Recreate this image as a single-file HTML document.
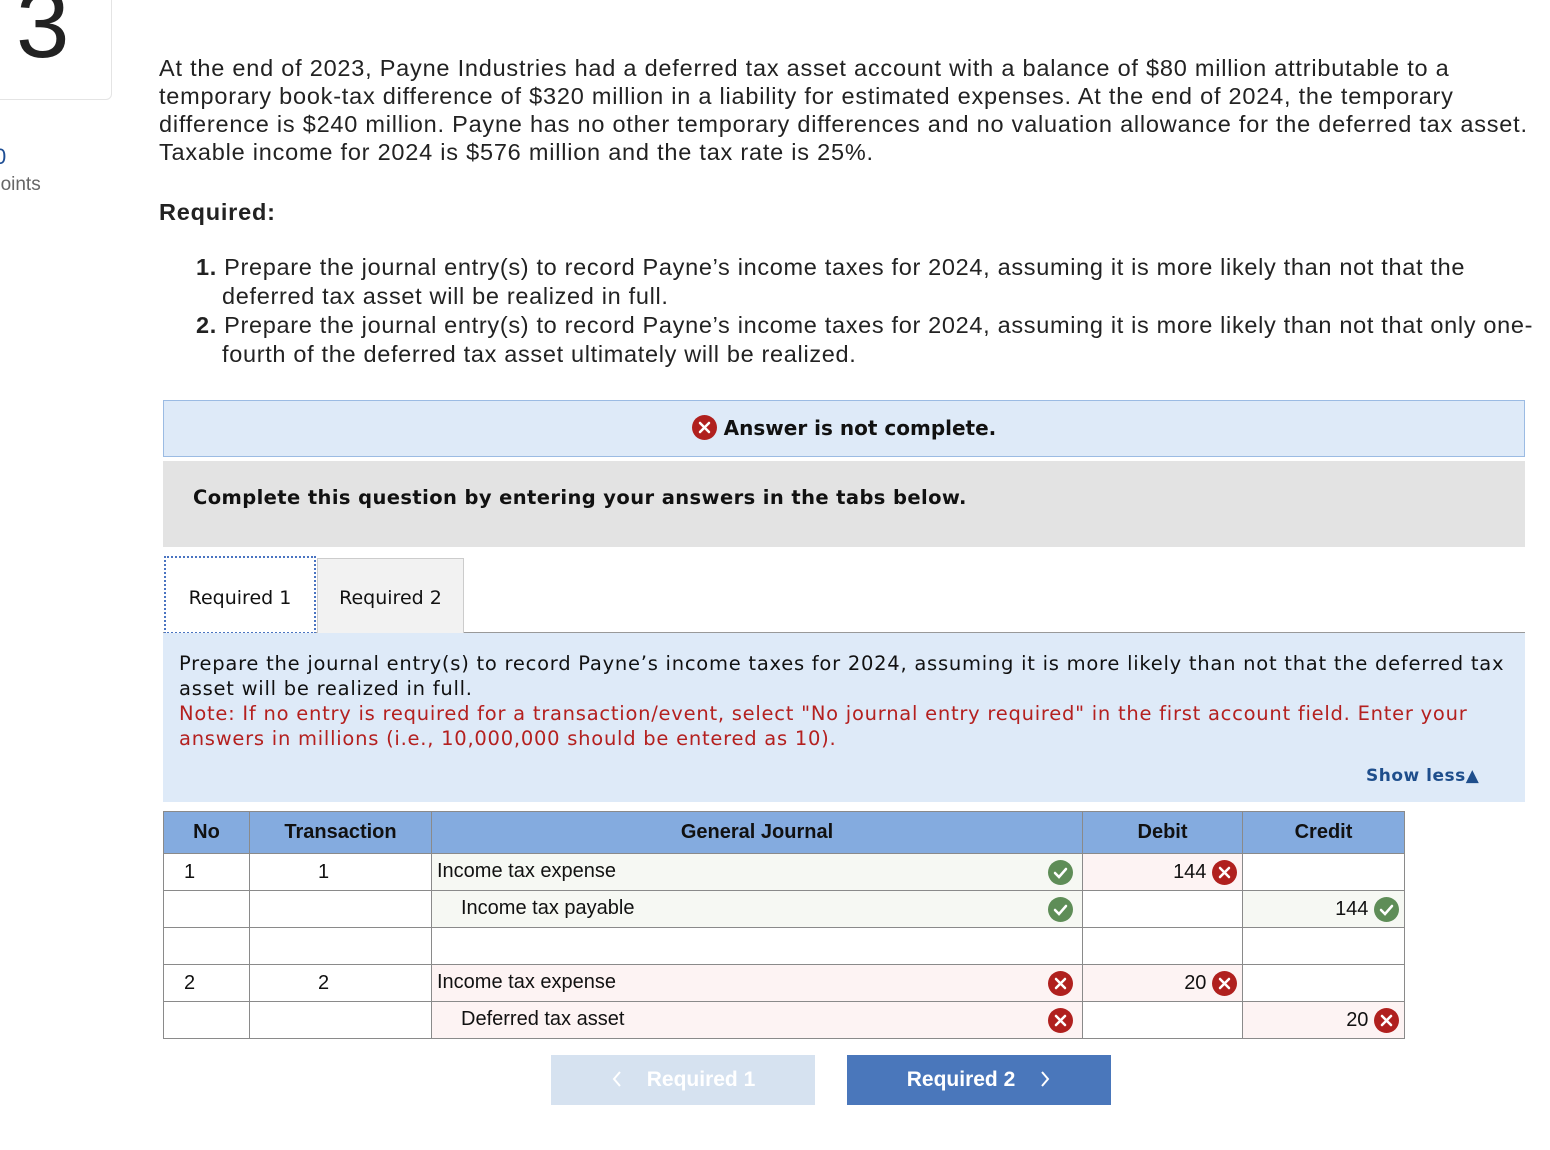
<!DOCTYPE html>
<html><head><meta charset="utf-8"><style>
body{margin:0;width:1550px;height:1150px;background:#fff;font-family:"Liberation Sans",sans-serif;color:#222;position:relative;overflow:hidden}
.a{position:absolute}
.p{font-size:23.5px;line-height:28px;color:#222;letter-spacing:0.78px;white-space:nowrap}
.ic{display:inline-block;width:25px;height:25px;border-radius:50%;vertical-align:middle;position:relative}
.ok{background:#5e8d57}.bad{background:#b0201e}
.ic svg{position:absolute;left:0;top:0}
table{border-collapse:collapse;font-size:20px;color:#111}
td,th{border:1px solid #8a8a8a;padding:0 5px;height:36px}
th{background:#84abdf;height:41px;font-weight:bold}
.gr{background:#f6f8f3}.rd{background:#fdf3f3}
.r{text-align:right}
</style></head><body>
<div class="a" style="left:-10px;top:-20px;width:120px;height:118px;border:1px solid #e4e4e4;border-radius:6px"></div>
<div class="a" style="left:16px;top:-30px;font-size:96px;color:#222;font-weight:300">3</div>
<div class="a" style="left:-6px;top:144px;font-size:22px;color:#1e4e94">0</div>
<div class="a" style="left:-10px;top:174px;font-size:19px;color:#666">points</div>
<div class="a p" style="left:159px;top:54px">At the end of 2023, Payne Industries had a deferred tax asset account with a balance of $80 million attributable to a<br>temporary book-tax difference of $320 million in a liability for estimated expenses. At the end of 2024, the temporary<br>difference is $240 million. Payne has no other temporary differences and no valuation allowance for the deferred tax asset.<br>Taxable income for 2024 is $576 million and the tax rate is 25%.</div>
<div class="a p" style="left:159px;top:198px;font-weight:bold">Required:</div>
<div class="a p" style="left:196px;top:253px;line-height:29px;letter-spacing:0.68px">
<div><b>1.</b> Prepare the journal entry(s) to record Payne’s income taxes for 2024, assuming it is more likely than not that the<br><span style="padding-left:26px">deferred tax asset will be realized in full.</span></div>
<div><b>2.</b> Prepare the journal entry(s) to record Payne’s income taxes for 2024, assuming it is more likely than not that only one-<br><span style="padding-left:26px">fourth of the deferred tax asset ultimately will be realized.</span></div></div>
<div class="a" style="left:163px;top:400px;width:1360px;height:55px;background:#deeaf8;border:1px solid #9bbbe3;text-align:center;line-height:55px;font-family:'DejaVu Sans',sans-serif;font-weight:bold;font-size:20px;color:#111">
<span class="ic bad" style="margin-top:-4px"><svg width="25" height="25"><path d="M8 8L17 17M17 8L8 17" stroke="#fff" stroke-width="2.5" stroke-linecap="round"/></svg></span> Answer is not complete.</div>
<div class="a" style="left:163px;top:461px;width:1362px;height:86px;background:#e3e3e3;font-family:'DejaVu Sans',sans-serif;font-weight:bold;font-size:19.5px;letter-spacing:0.4px;color:#111;line-height:74px;padding-left:30px;box-sizing:border-box">Complete this question by entering your answers in the tabs below.</div>
<div class="a" style="left:163px;top:632px;width:1362px;height:1px;background:#999"></div>
<div class="a" style="left:164px;top:556px;width:152px;height:78px;border:2px dotted #4a74c1;box-sizing:border-box;background:#fff;text-align:center;line-height:80px;font-family:'DejaVu Sans',sans-serif;font-size:19px;color:#111">Required 1</div>
<div class="a" style="left:317px;top:558px;width:147px;height:75px;border:1px solid #ccc;border-bottom:none;box-sizing:border-box;background:#f2f2f2;text-align:center;line-height:78px;font-family:'DejaVu Sans',sans-serif;font-size:19px;color:#111">Required 2</div>
<div class="a" style="left:163px;top:633px;width:1362px;height:169px;background:#deeaf8"></div>
<div class="a" style="left:179px;top:651px;white-space:nowrap;font-family:'DejaVu Sans',sans-serif;font-size:19.5px;letter-spacing:0.75px;line-height:25px;color:#111">Prepare the journal entry(s) to record Payne’s income taxes for 2024, assuming it is more likely than not that the deferred tax<br>asset will be realized in full.<br><span style="color:#b4201f">Note: If no entry is required for a transaction/event, select "No journal entry required" in the first account field. Enter your<br>answers in millions (i.e., 10,000,000 should be entered as 10).</span></div>
<div class="a" style="left:1366px;top:766px;font-family:'DejaVu Sans',sans-serif;font-weight:bold;font-size:17px;letter-spacing:0.5px;color:#1e4e8c">Show less▲</div>
<table class="a" style="left:163px;top:811px;width:1242px">
<tr><th style="width:75px">No</th><th style="width:171px">Transaction</th><th>General Journal</th><th style="width:149px">Debit</th><th style="width:151px">Credit</th></tr>
<tr><td style="padding-left:20px">1</td><td style="padding-left:68px">1</td><td class="gr">Income tax expense<span class="ic ok" style="float:right;margin-right:4px"><svg width="25" height="25"><path d="M7 13L11 17L18 9" stroke="#fff" stroke-width="2.5" fill="none" stroke-linecap="round"/></svg></span></td><td class="rd r">144 <span class="ic bad"><svg width="25" height="25"><path d="M8 8L17 17M17 8L8 17" stroke="#fff" stroke-width="2.5" stroke-linecap="round"/></svg></span></td><td></td></tr>
<tr><td></td><td></td><td class="gr" style="padding-left:29px">Income tax payable<span class="ic ok" style="float:right;margin-right:4px"><svg width="25" height="25"><path d="M7 13L11 17L18 9" stroke="#fff" stroke-width="2.5" fill="none" stroke-linecap="round"/></svg></span></td><td></td><td class="gr r">144 <span class="ic ok"><svg width="25" height="25"><path d="M7 13L11 17L18 9" stroke="#fff" stroke-width="2.5" fill="none" stroke-linecap="round"/></svg></span></td></tr>
<tr><td></td><td></td><td></td><td></td><td></td></tr>
<tr><td style="padding-left:20px">2</td><td style="padding-left:68px">2</td><td class="rd">Income tax expense<span class="ic bad" style="float:right;margin-right:4px"><svg width="25" height="25"><path d="M8 8L17 17M17 8L8 17" stroke="#fff" stroke-width="2.5" stroke-linecap="round"/></svg></span></td><td class="rd r">20 <span class="ic bad"><svg width="25" height="25"><path d="M8 8L17 17M17 8L8 17" stroke="#fff" stroke-width="2.5" stroke-linecap="round"/></svg></span></td><td></td></tr>
<tr><td></td><td></td><td class="rd" style="padding-left:29px">Deferred tax asset<span class="ic bad" style="float:right;margin-right:4px"><svg width="25" height="25"><path d="M8 8L17 17M17 8L8 17" stroke="#fff" stroke-width="2.5" stroke-linecap="round"/></svg></span></td><td></td><td class="rd r">20 <span class="ic bad"><svg width="25" height="25"><path d="M8 8L17 17M17 8L8 17" stroke="#fff" stroke-width="2.5" stroke-linecap="round"/></svg></span></td></tr>
</table>
<div class="a" style="left:551px;top:1055px;width:264px;height:50px;background:#d6e2f0;color:#fff;font-weight:bold;font-size:21px;text-align:center;line-height:50px"><svg width="12" height="18" style="vertical-align:-2px;margin-right:24px"><path d="M9 2L3 9L9 16" stroke="#fff" stroke-width="2" fill="none"/></svg>Required 1</div>
<div class="a" style="left:847px;top:1055px;width:264px;height:50px;background:#4a77bb;color:#fff;font-weight:bold;font-size:21px;text-align:center;line-height:50px">Required 2<svg width="12" height="18" style="vertical-align:-2px;margin-left:24px"><path d="M3 2L9 9L3 16" stroke="#fff" stroke-width="2" fill="none"/></svg></div>
</body></html>
